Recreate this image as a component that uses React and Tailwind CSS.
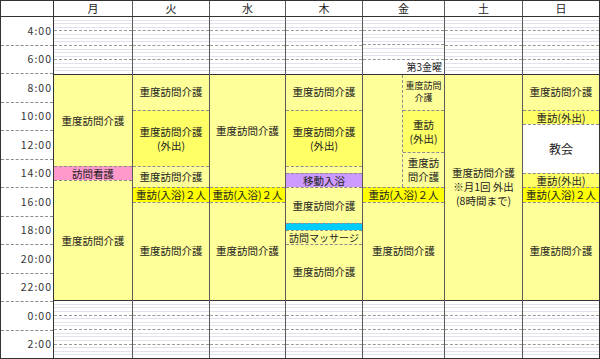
import React from 'react'

const PALE = 'bg-[#ffff99]'
const MID = 'bg-[#ffff66]'
const BRIGHT = 'bg-[#ffff00]'
const DASH = 'border-dashed border-[#8c8c8c]'

const NYUYOKU = { span: 'row-span-2', bg: BRIGHT, text: ['重訪(入浴)２人'] }

const days = [
  {
    name: '月', w: 'w-[79px]',
    blocks: [
      { span: 'row-span-13', bg: PALE, text: ['重度訪問介護'] },
      { span: 'row-span-2', bg: 'bg-[#ff99cc]', text: ['訪問看護'] },
      { span: 'row-span-17', bg: PALE, text: ['重度訪問介護'] },
    ],
  },
  {
    name: '火', w: 'w-[77px]',
    blocks: [
      { span: 'row-span-5', bg: PALE, text: ['重度訪問介護'] },
      { span: 'row-span-8', bg: MID, text: ['重度訪問介護', '(外出)'] },
      { span: 'row-span-3', bg: PALE, text: ['重度訪問介護'] },
      NYUYOKU,
      { span: 'row-span-14', bg: PALE, text: ['重度訪問介護'] },
    ],
  },
  {
    name: '水', w: 'w-[76px]',
    blocks: [
      { span: 'row-span-16', bg: PALE, text: ['重度訪問介護'] },
      NYUYOKU,
      { span: 'row-span-14', bg: PALE, text: ['重度訪問介護'] },
    ],
  },
  {
    name: '木', w: 'w-[77px]',
    blocks: [
      { span: 'row-span-5', bg: PALE, text: ['重度訪問介護'] },
      { span: 'row-span-8', bg: MID, text: ['重度訪問介護', '(外出)'] },
      { span: 'row-span-1', bg: PALE },
      { span: 'row-span-2', bg: 'bg-[#cc99ff]', text: ['移動入浴'] },
      { span: 'row-span-5', bg: PALE, text: ['重度訪問介護'] },
      { span: 'row-span-1', bg: 'bg-[#00ccff]' },
      { span: 'row-span-2', bg: PALE, text: ['訪問マッサージ'], size: 'text-[10px] leading-[13px]' },
      { span: 'row-span-8', bg: PALE, text: ['重度訪問介護'] },
    ],
  },
  { name: '金', w: 'w-[82px]', friday: true },
  {
    name: '土', w: 'w-[78px]',
    blocks: [
      { span: 'row-span-32', bg: PALE, text: ['重度訪問介護', '※月1回 外出', '(8時間まで)'], size: 'text-[10.5px] leading-[14px]' },
    ],
  },
  {
    name: '日', w: 'flex-1', last: true,
    blocks: [
      { span: 'row-span-5', bg: PALE, text: ['重度訪問介護'] },
      { span: 'row-span-2', bg: MID, text: ['重訪(外出)'] },
      { span: 'row-span-7', bg: 'bg-white', text: ['教会'], size: 'text-[12px] leading-[14px]' },
      { span: 'row-span-2', bg: MID, text: ['重訪(外出)'] },
      NYUYOKU,
      { span: 'row-span-14', bg: PALE, text: ['重度訪問介護'] },
    ],
  },
]

const times = ['4:00', '6:00', '8:00', '10:00', '12:00', '14:00', '16:00', '18:00', '20:00', '22:00', '0:00', '2:00']

function OffHours({ span, hours, lastLine }) {
  return (
    <div className={`${span} flex flex-col`}>
      {Array.from({ length: hours }).map((_, i) => (
        <div
          key={i}
          className={`flex-1 flex flex-col ${i < hours - 1 || lastLine ? 'border-b border-dashed border-[#9a9a9a]' : ''}`}
        >
          {[0, 1, 2, 3].map((q) => (
            <div key={q} className={`flex-1 ${q < 3 ? 'border-b border-[#e2e2ee]' : ''}`} />
          ))}
        </div>
      ))}
    </div>
  )
}

function Block({ b, first, extra = '' }) {
  return (
    <div
      className={`${b.span} ${b.bg} ${extra} flex flex-col items-center justify-center text-center whitespace-nowrap overflow-hidden ${first ? '' : `border-t ${DASH}`} ${b.size ?? 'text-[10.5px] leading-[14px]'}`}
    >
      {b.text?.map((t) => <span key={t}>{t}</span>)}
    </div>
  )
}

function FridayMiddle() {
  const sub = [
    { span: 'row-span-5', bg: PALE, text: ['重度訪問', '介護'], size: 'text-[9px] leading-[12px]' },
    { span: 'row-span-6', bg: MID, text: ['重訪', '(外出)'], size: 'text-[10.5px] leading-[14px]' },
    { span: 'row-span-5', bg: PALE, text: ['重度訪', '問介護'], size: 'text-[10.5px] leading-[14px]' },
  ]
  return (
    <>
      <div className="row-span-16 grid grid-cols-[40px_1fr] grid-rows-16">
        <div className={`row-span-16 ${PALE} border-r ${DASH}`} />
        {sub.map((b, i) => <Block key={i} b={b} first={i === 0} extra="col-start-2" />)}
      </div>
      <Block b={NYUYOKU} />
      <Block b={{ span: 'row-span-14', bg: PALE, text: ['重度訪問介護'] }} />
    </>
  )
}

function DayColumn({ d }) {
  return (
    <div className={`${d.w} grid grid-rows-48 ${d.last ? '' : 'border-r border-[#5a5a5a]'}`}>
      {d.friday ? (
        <>
          <OffHours span="row-span-6" hours={3} lastLine />
          <div className="row-span-2 flex items-center justify-end pr-[2px] text-[10px] leading-none whitespace-nowrap">
            第3金曜
          </div>
        </>
      ) : (
        <OffHours span="row-span-8" hours={4} />
      )}
      <div className="row-span-32 grid grid-rows-32 border-y border-[#333]">
        {d.friday ? <FridayMiddle /> : d.blocks.map((b, i) => <Block key={i} b={b} first={i === 0} />)}
      </div>
      <OffHours span="row-span-8" hours={4} />
    </div>
  )
}

export default function App() {
  return (
    <div className="w-[600px] h-[359px] bg-white border border-[#333] flex flex-col text-[#222] font-['Noto_Sans_CJK_JP','Noto_Sans',sans-serif]">
      {/* 曜日 */}
      <div className="h-[16px] flex border-b border-[#333] text-[11px] leading-none">
        <div className="w-[53px] border-r border-[#333]" />
        {days.map((d) => (
          <div
            key={d.name}
            className={`${d.w} flex items-center justify-center ${d.last ? '' : 'border-r border-[#5a5a5a]'}`}
          >
            {d.name}
          </div>
        ))}
      </div>

      <div className="flex-1 flex min-h-0">
        {/* 時刻 */}
        <div className="w-[53px] flex flex-col border-r border-[#333] text-[10.5px] tracking-[1px] leading-none text-[#333]">
          {times.map((t, i) => (
            <div
              key={t}
              className={`flex-1 flex items-center justify-end pr-[1px] ${i < times.length - 1 ? `border-b ${DASH}` : ''}`}
            >
              {t}
            </div>
          ))}
        </div>

        {days.map((d) => <DayColumn key={d.name} d={d} />)}
      </div>
    </div>
  )
}
